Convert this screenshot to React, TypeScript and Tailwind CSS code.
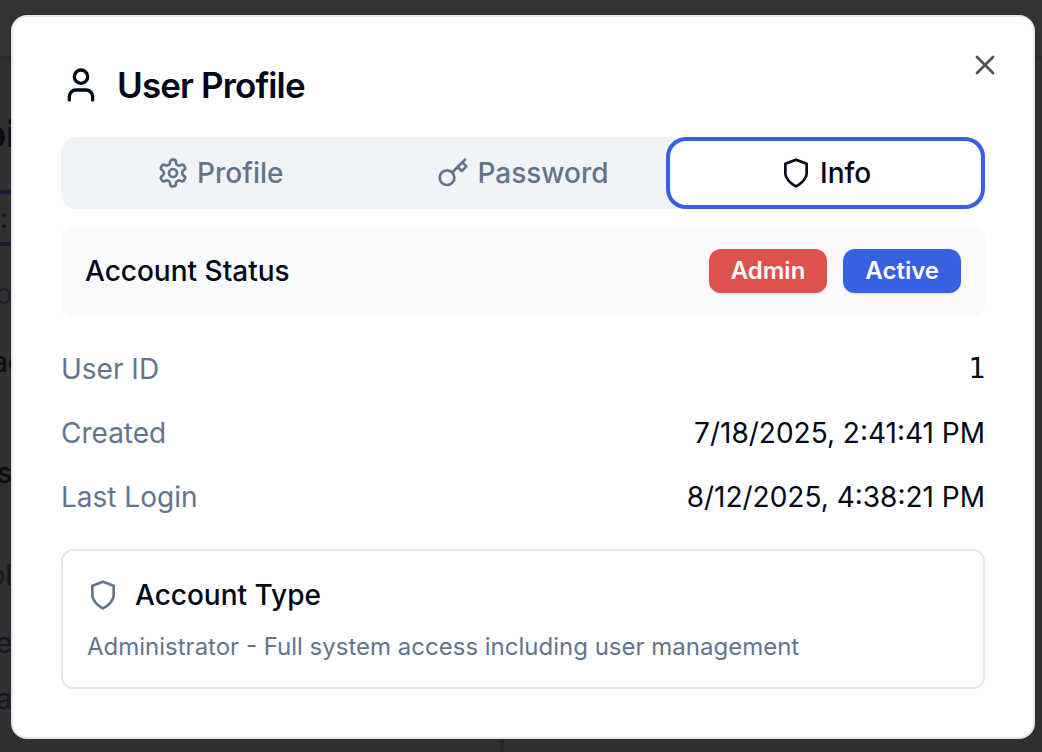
import type { ReactNode } from "react";
import { User, X } from "lucide-react";

function Icon({ children, className = "" }: { children: ReactNode; className?: string }) {
  return (
    <svg
      viewBox="0 0 24 24"
      fill="none"
      stroke="currentColor"
      strokeWidth="2"
      strokeLinecap="round"
      strokeLinejoin="round"
      aria-hidden="true"
      className={`size-8 shrink-0 ${className}`}
    >
      {children}
    </svg>
  );
}

function ShieldIcon({ className }: { className?: string }) {
  return (
    <Icon className={className}>
      <path d="M12 22s8-4 8-10V5l-8-3-8 3v7c0 6 8 10 8 10" />
    </Icon>
  );
}

function KeyIcon() {
  return (
    <Icon>
      <circle cx="7.5" cy="15.5" r="5.5" />
      <path d="m21 2-9.6 9.6" />
      <path d="m15.5 7.5 3 3L22 7l-3-3" />
    </Icon>
  );
}

function GearIcon() {
  return (
    <Icon>
      <path d="M12.22 2h-.44a2 2 0 0 0-2 2v.18a2 2 0 0 1-1 1.73l-.43.25a2 2 0 0 1-2 0l-.15-.08a2 2 0 0 0-2.73.73l-.22.38a2 2 0 0 0 .73 2.73l.15.1a2 2 0 0 1 1 1.72v.51a2 2 0 0 1-1 1.74l-.15.09a2 2 0 0 0-.73 2.73l.22.38a2 2 0 0 0 2.73.73l.15-.08a2 2 0 0 1 2 0l.43.25a2 2 0 0 1 1 1.73V20a2 2 0 0 0 2 2h.44a2 2 0 0 0 2-2v-.18a2 2 0 0 1 1-1.73l.43-.25a2 2 0 0 1 2 0l.15.08a2 2 0 0 0 2.73-.73l.22-.39a2 2 0 0 0-.73-2.73l-.15-.08a2 2 0 0 1-1-1.74v-.5a2 2 0 0 1 1-1.74l.15-.09a2 2 0 0 0 .73-2.73l-.22-.38a2 2 0 0 0-2.73-.73l-.15.08a2 2 0 0 1-2 0l-.43-.25a2 2 0 0 1-1-1.73V4a2 2 0 0 0-2-2z" />
      <circle cx="12" cy="12" r="3" />
    </Icon>
  );
}

function Tab({ icon, label, active = false }: { icon: ReactNode; label: string; active?: boolean }) {
  return (
    <button
      type="button"
      role="tab"
      aria-selected={active}
      className={
        active
          ? "flex h-14 items-center justify-center gap-2 rounded-xl bg-white text-[28px] leading-10 font-medium text-[#020817] ring-4 ring-[#3761e3] ring-offset-4 ring-offset-white"
          : "flex h-14 items-center justify-center gap-2 rounded-xl text-[28px] leading-10 font-medium text-[#64748b]"
      }
    >
      {icon}
      {label}
    </button>
  );
}

function Row({ label, value, mono = false }: { label: string; value: string; mono?: boolean }) {
  return (
    <div className="flex items-center justify-between">
      <dt className="text-[#64748b]">{label}</dt>
      <dd className={mono ? "font-['DejaVu_Sans_Mono',monospace]" : ""}>{value}</dd>
    </div>
  );
}

function Backdrop() {
  return (
    <div className="absolute inset-0 overflow-hidden bg-[#303030]" aria-hidden="true">
      <div className="absolute bottom-0 left-[48%] h-8 w-1 bg-[#272727]" />
      <div className="h-[60px] border-b-4 border-[#2c2c2c] bg-[#323232]" />
      <div className="flex w-4 flex-col items-end text-[28px] leading-10 text-[#0c0d10]">
        <div className="mt-12 text-[36px] leading-[52px] font-bold">pi</div>
        <div className="mt-[30px] flex h-14 w-4 items-center border-y-4 border-[#1d1740] text-[#111]">:</div>
        <div className="mt-7 pr-1 text-[#1a1e25]">o</div>
        <div className="-mr-2 mt-7 font-medium">ac</div>
        <div className="mt-[71px] pr-1 font-medium">s</div>
        <div className="mt-[62px] pr-1 text-[#14171d]">ol</div>
        <div className="mt-7 pr-1 text-[#14171d]">e</div>
        <div className="mt-4 pr-1 text-[#14171d]">a</div>
      </div>
    </div>
  );
}

export default function App() {
  return (
    <div className="relative min-h-screen pt-[15px] pr-[7px] pb-[13px] pl-[11px] font-[Inter,sans-serif] text-[#020817]">
      <Backdrop />
      <div
        role="dialog"
        aria-modal="true"
        aria-labelledby="dialog-title"
        className="relative rounded-2xl border-2 border-[#e2e8f0] bg-white p-12"
      >
        <header className="flex items-center gap-4">
          <User size={40} />
          <h2 id="dialog-title" className="text-[35px] leading-10 font-semibold tracking-tight">
            User Profile
          </h2>
        </header>
        <button type="button" aria-label="Close" className="absolute top-8 right-8 opacity-70">
          <X size={32} />
        </button>

        <div role="tablist" className="mt-8 grid grid-cols-3 rounded-2xl bg-[#f0f4f8] p-2">
          <Tab icon={<GearIcon />} label="Profile" />
          <Tab icon={<KeyIcon />} label="Password" />
          <Tab icon={<ShieldIcon />} label="Info" active />
        </div>

        <div role="tabpanel" className="mt-4 flex flex-col gap-8 text-[28px] leading-10">
          <div className="flex items-center justify-between rounded-xl bg-[#f9fafc] p-6">
            <span className="font-medium">Account Status</span>
            <div className="flex gap-4 text-2xl leading-8 font-semibold text-[#f8fafc]">
              <span className="rounded-xl border-2 border-transparent bg-[#df514c] px-5 py-1 shadow-sm">Admin</span>
              <span className="rounded-xl border-2 border-transparent bg-[#3761e3] px-5 py-1 shadow-sm">Active</span>
            </div>
          </div>

          <dl className="flex flex-col gap-6">
            <Row label="User ID" value="1" mono />
            <Row label="Created" value="7/18/2025, 2:41:41 PM" />
            <Row label="Last Login" value="8/12/2025, 4:38:21 PM" />
          </dl>

          <section className="rounded-xl border-2 border-[#e2e8f0] p-6">
            <div className="flex items-center gap-4">
              <ShieldIcon className="text-[#64748b]" />
              <h3 className="font-medium">Account Type</h3>
            </div>
            <p className="mt-4 text-2xl leading-8 text-[#64748b]">
              Administrator - Full system access including user management
            </p>
          </section>
        </div>
      </div>
    </div>
  );
}
